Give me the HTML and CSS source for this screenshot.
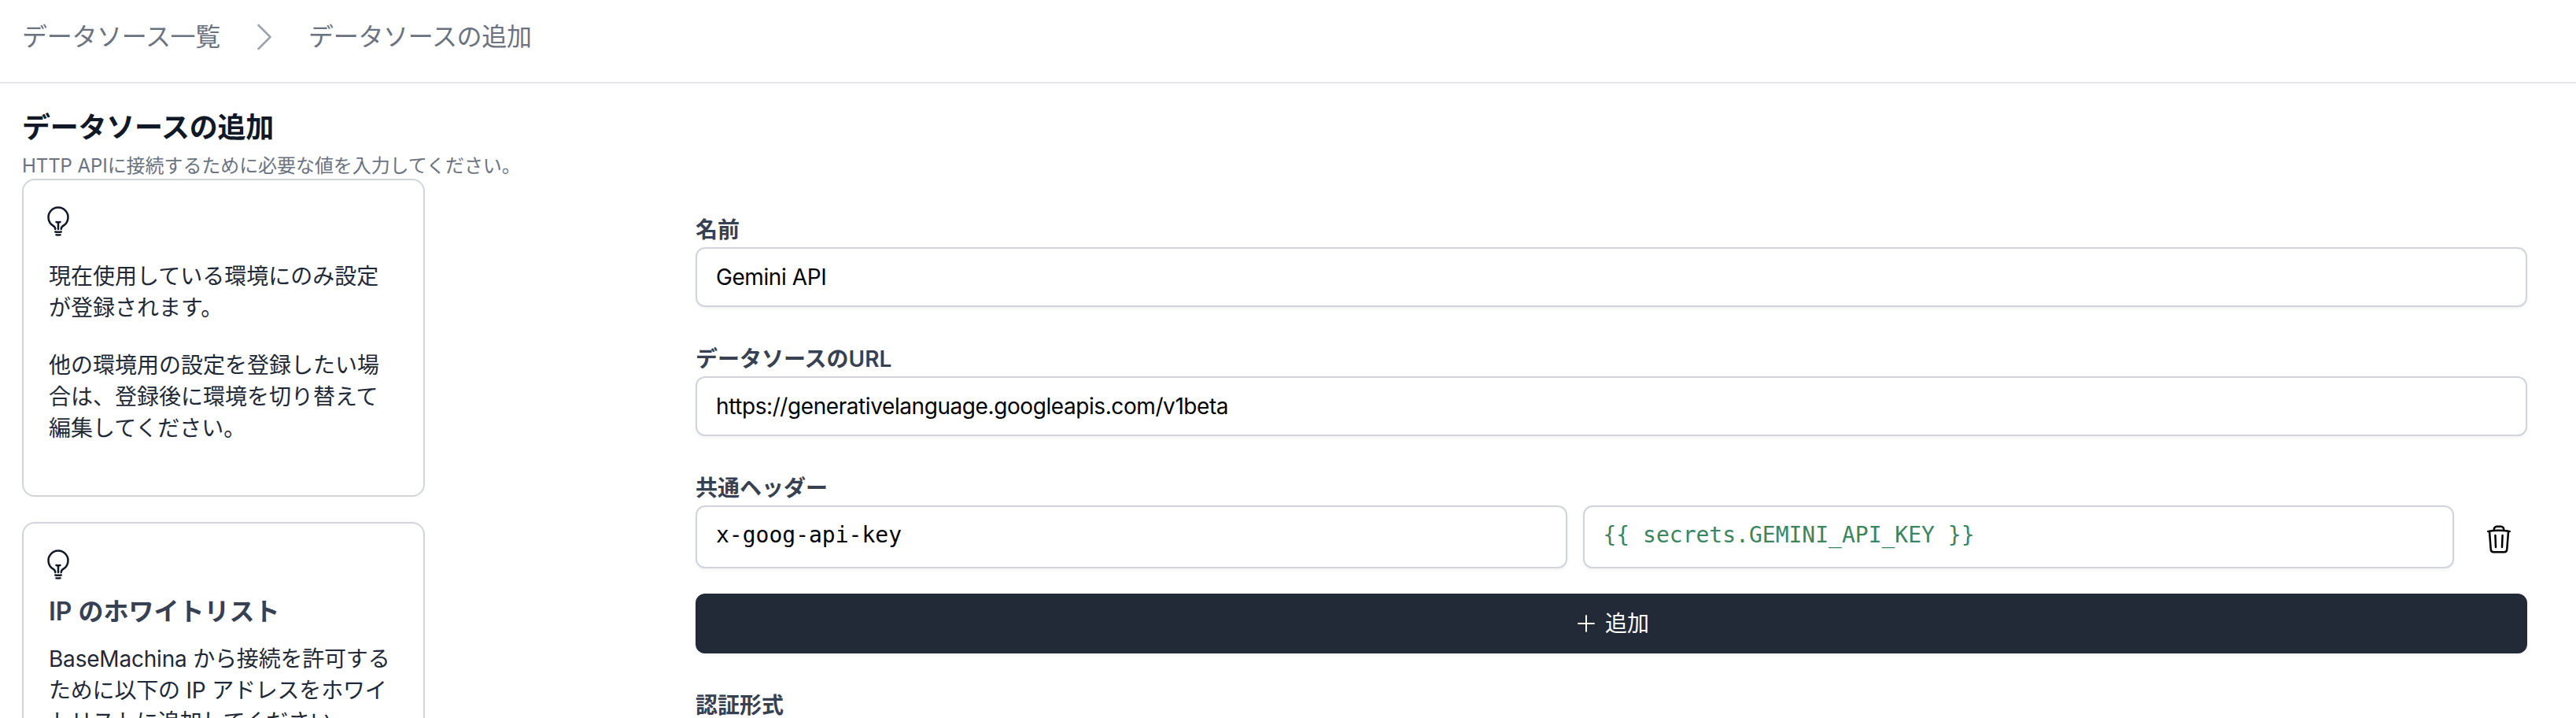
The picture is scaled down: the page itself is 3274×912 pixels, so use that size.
FILE: index.html
```html
<!DOCTYPE html>
<html lang="ja">
<head>
    <meta charset="UTF-8">
    <title>データソースの追加</title>
    <link rel="stylesheet" href="styles.css">
</head>
<body>
    <!-- パンくず -->
    <header class="topbar">
        <span class="crumb">データソース一覧</span>
        <svg class="crumb-chevron" viewBox="0 0 24 24" fill="none" stroke="currentColor" stroke-width="1.25" stroke-linecap="round" stroke-linejoin="round">
            <path d="m8.25 4.5 7.5 7.5-7.5 7.5"/>
        </svg>
        <span class="crumb">データソースの追加</span>
    </header>

    <main class="page">
        <h1 class="page-title">データソースの追加</h1>
        <p class="page-sub">HTTP APIに接続するために必要な値を入力してください。</p>

        <div class="columns">
            <!-- ヒント -->
            <aside class="side">
                <section class="note">
                    <svg class="bulb" viewBox="0 0 24 24" fill="none" stroke="currentColor" stroke-width="1.5" stroke-linecap="round" stroke-linejoin="round">
                        <path d="M12 18v-5.25m0 0a6.01 6.01 0 0 0 1.5-.189m-1.5.189a6.01 6.01 0 0 1-1.5-.189m3.75 7.478a12.06 12.06 0 0 1-4.5 0m3.75 2.383a14.406 14.406 0 0 1-3 0M14.25 18v-.192c0-.983.658-1.823 1.508-2.316a7.5 7.5 0 1 0-7.517 0c.85.493 1.509 1.333 1.509 2.316V18"/>
                    </svg>
                    <p>現在使用している環境にのみ設定が登録されます。</p>
                    <p>他の環境用の設定を登録したい場合は、登録後に環境を切り替えて編集してください。</p>
                </section>
                <section class="note">
                    <svg class="bulb" viewBox="0 0 24 24" fill="none" stroke="currentColor" stroke-width="1.5" stroke-linecap="round" stroke-linejoin="round">
                        <path d="M12 18v-5.25m0 0a6.01 6.01 0 0 0 1.5-.189m-1.5.189a6.01 6.01 0 0 1-1.5-.189m3.75 7.478a12.06 12.06 0 0 1-4.5 0m3.75 2.383a14.406 14.406 0 0 1-3 0M14.25 18v-.192c0-.983.658-1.823 1.508-2.316a7.5 7.5 0 1 0-7.517 0c.85.493 1.509 1.333 1.509 2.316V18"/>
                    </svg>
                    <h2 class="note-title">IP のホワイトリスト</h2>
                    <p class="note-tight">BaseMachina から接続を許可するために以下の IP アドレスをホワイトリストに追加してください。</p>
                </section>
            </aside>

            <!-- フォーム -->
            <form class="form">
                <div class="field">
                    <div class="field-label">名前</div>
                    <div class="input">Gemini API</div>
                </div>
                <div class="field">
                    <div class="field-label">データソースのURL</div>
                    <div class="input">https://generativelanguage.googleapis.com/v1beta</div>
                </div>
                <div class="field">
                    <div class="field-label">共通ヘッダー</div>
                    <div class="header-row">
                        <div class="input input-mono">x-goog-api-key</div>
                        <div class="input input-mono input-var">{{ secrets.GEMINI_API_KEY }}</div>
                        <button type="button" class="trash-btn">
                            <svg viewBox="0 0 24 24" fill="none" stroke="currentColor" stroke-width="1.5" stroke-linecap="round" stroke-linejoin="round">
                                <path d="m14.74 9-.346 9m-4.788 0L9.26 9m9.968-3.21c.342.052.682.107 1.022.166m-1.022-.165L18.16 19.673a2.25 2.25 0 0 1-2.244 2.077H8.084a2.25 2.25 0 0 1-2.244-2.077L4.772 5.79m14.456 0a48.108 48.108 0 0 0-3.478-.397m-12 .562c.34-.059.68-.114 1.022-.165m0 0a48.11 48.11 0 0 1 3.478-.397m7.5 0v-.916c0-1.18-.91-2.164-2.09-2.201a51.964 51.964 0 0 0-3.32 0c-1.18.037-2.09 1.022-2.09 2.201v.916m7.5 0a48.667 48.667 0 0 0-7.5 0"/>
                            </svg>
                        </button>
                    </div>
                    <button type="button" class="add-btn">
                        <svg viewBox="0 0 24 24" fill="none" stroke="currentColor" stroke-width="1.5" stroke-linecap="round" stroke-linejoin="round">
                            <path d="M12 4.5v15m7.5-7.5h-15"/>
                        </svg>
                        追加
                    </button>
                </div>
                <div class="field">
                    <div class="field-label">認証形式</div>
                </div>
            </form>
        </div>
    </main>
</body>
</html>
```

FILE: styles.css
```css
html, body {
    height: 100%;
    overflow: hidden;
}

body {
    margin: 0;
    background-color: #fff;
    color: #111827;
    font-family: Inter, "Noto Sans CJK JP", sans-serif;
    font-size: 28px;
    line-height: 40px;
}

/* パンくず */
.topbar {
    display: flex;
    align-items: center;
    gap: 32px;
    box-sizing: border-box;
    height: 106px;
    padding: 0 28px 10px;
    border-bottom: 2px solid #e5e7eb;
}

.crumb {
    color: #6b7280;
    font-size: 32px;
    letter-spacing: -0.3px;
}

.crumb-chevron {
    width: 48px;
    height: 48px;
    color: #9ca3af;
}

/* 本文 */
.page {
    padding: 28px 62px 0 28px;
}

.page-title {
    margin: 0;
    font-size: 36px;
    font-weight: 700;
    line-height: 56px;
    letter-spacing: -0.25px;
}

.page-sub {
    margin: 5px 0 0;
    color: #6b7280;
    font-size: 24px;
    line-height: 32px;
    letter-spacing: -0.07px;
}

.columns {
    display: flex;
    gap: 344px;
}

/* ヒント */
.side {
    flex: none;
    width: 512px;
}

.note {
    box-sizing: border-box;
    margin-bottom: 32px;
    padding: 32px;
    border: 2px solid #d1d5db;
    border-radius: 16px;
    color: #1f2937;
}

.note p {
    margin: 0 0 33px;
}

.note .note-tight {
    letter-spacing: -0.2px;
}

.bulb {
    display: block;
    width: 40px;
    height: 40px;
    margin: 0 0 30px -8px;
    color: #111827;
}

.note-title {
    margin: -14px 0 16px;
    color: #374151;
    font-size: 32px;
    font-weight: 600;
    line-height: 48px;
}

/* フォーム */
.form {
    flex: 1;
    min-width: 0;
    padding-top: 45px;
}

.field {
    margin-bottom: 46px;
}

.field-label {
    margin-bottom: 2px;
    color: #374151;
    font-weight: 600;
}

.input {
    display: flex;
    align-items: center;
    box-sizing: border-box;
    height: 76px;
    padding: 0 24px;
    border: 2px solid #d1d5db;
    border-radius: 12px;
    box-shadow: 0 2px 4px rgba(0, 0, 0, 0.05);
    color: #000;
    background-color: #fff;
    letter-spacing: -0.42px;
}

.header-row {
    display: flex;
    gap: 20px;
}

.input-mono {
    flex: 1;
    min-width: 0;
    height: 80px;
    padding-bottom: 4px;
    font-family: "DejaVu Sans Mono", monospace;
    letter-spacing: 0;
}

.input-var {
    color: #3b8560;
}

.trash-btn {
    flex: none;
    width: 40px;
    height: 40px;
    margin: 23px 16px 0 17px;
    padding: 0;
    border: none;
    background: none;
    color: #000;
}

.trash-btn svg {
    display: block;
    width: 40px;
    height: 40px;
}

.add-btn {
    display: flex;
    align-items: center;
    justify-content: center;
    gap: 8px;
    width: 100%;
    height: 76px;
    margin-top: 32px;
    border: none;
    border-radius: 12px;
    background-color: #232a37;
    box-shadow: 0 2px 4px rgba(0, 0, 0, 0.05);
    color: #fff;
    font: inherit;
}

.add-btn svg {
    width: 32px;
    height: 32px;
}
```
